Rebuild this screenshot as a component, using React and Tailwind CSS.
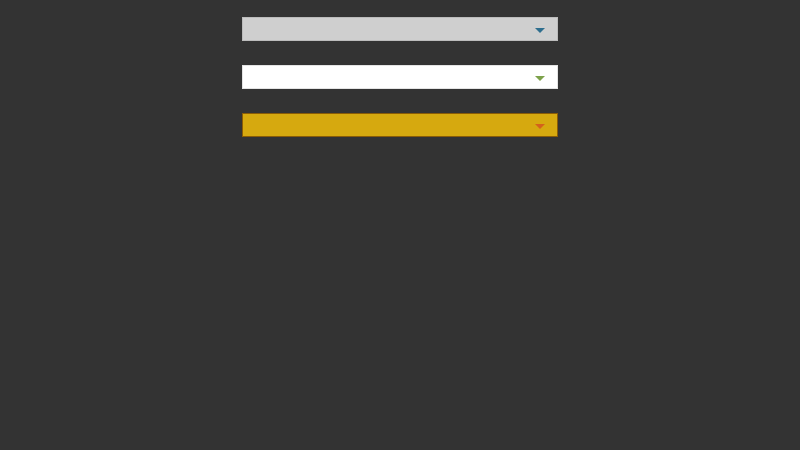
export default function App() {
  const boxes = [
    { bg: "bg-[#cfcfcf]", border: "border-[#bcbcbc]", arrow: "#2e6e8e" },
    { bg: "bg-[#ffffff]", border: "border-[#e4e4e4]", arrow: "#7da24a" },
    { bg: "bg-[#d6a90f]", border: "border-[#8a5c06]", arrow: "#d3621c" },
  ];
  return (
    <div className="min-h-[450px] w-full bg-[#333333] pt-[17px]">
      <div className="mx-auto flex w-[316px] flex-col gap-[24px]">
        {boxes.map((b, i) => (
          <div
            key={i}
            className={`flex h-[24px] items-center justify-end border ${b.bg} ${b.border} pr-[12px]`}
          >
            <svg className="mt-[2px]" width="10" height="5" viewBox="0 0 10 5">
              <polygon points="0,0 10,0 5,5" fill={b.arrow} />
            </svg>
          </div>
        ))}
      </div>
    </div>
  );
}
